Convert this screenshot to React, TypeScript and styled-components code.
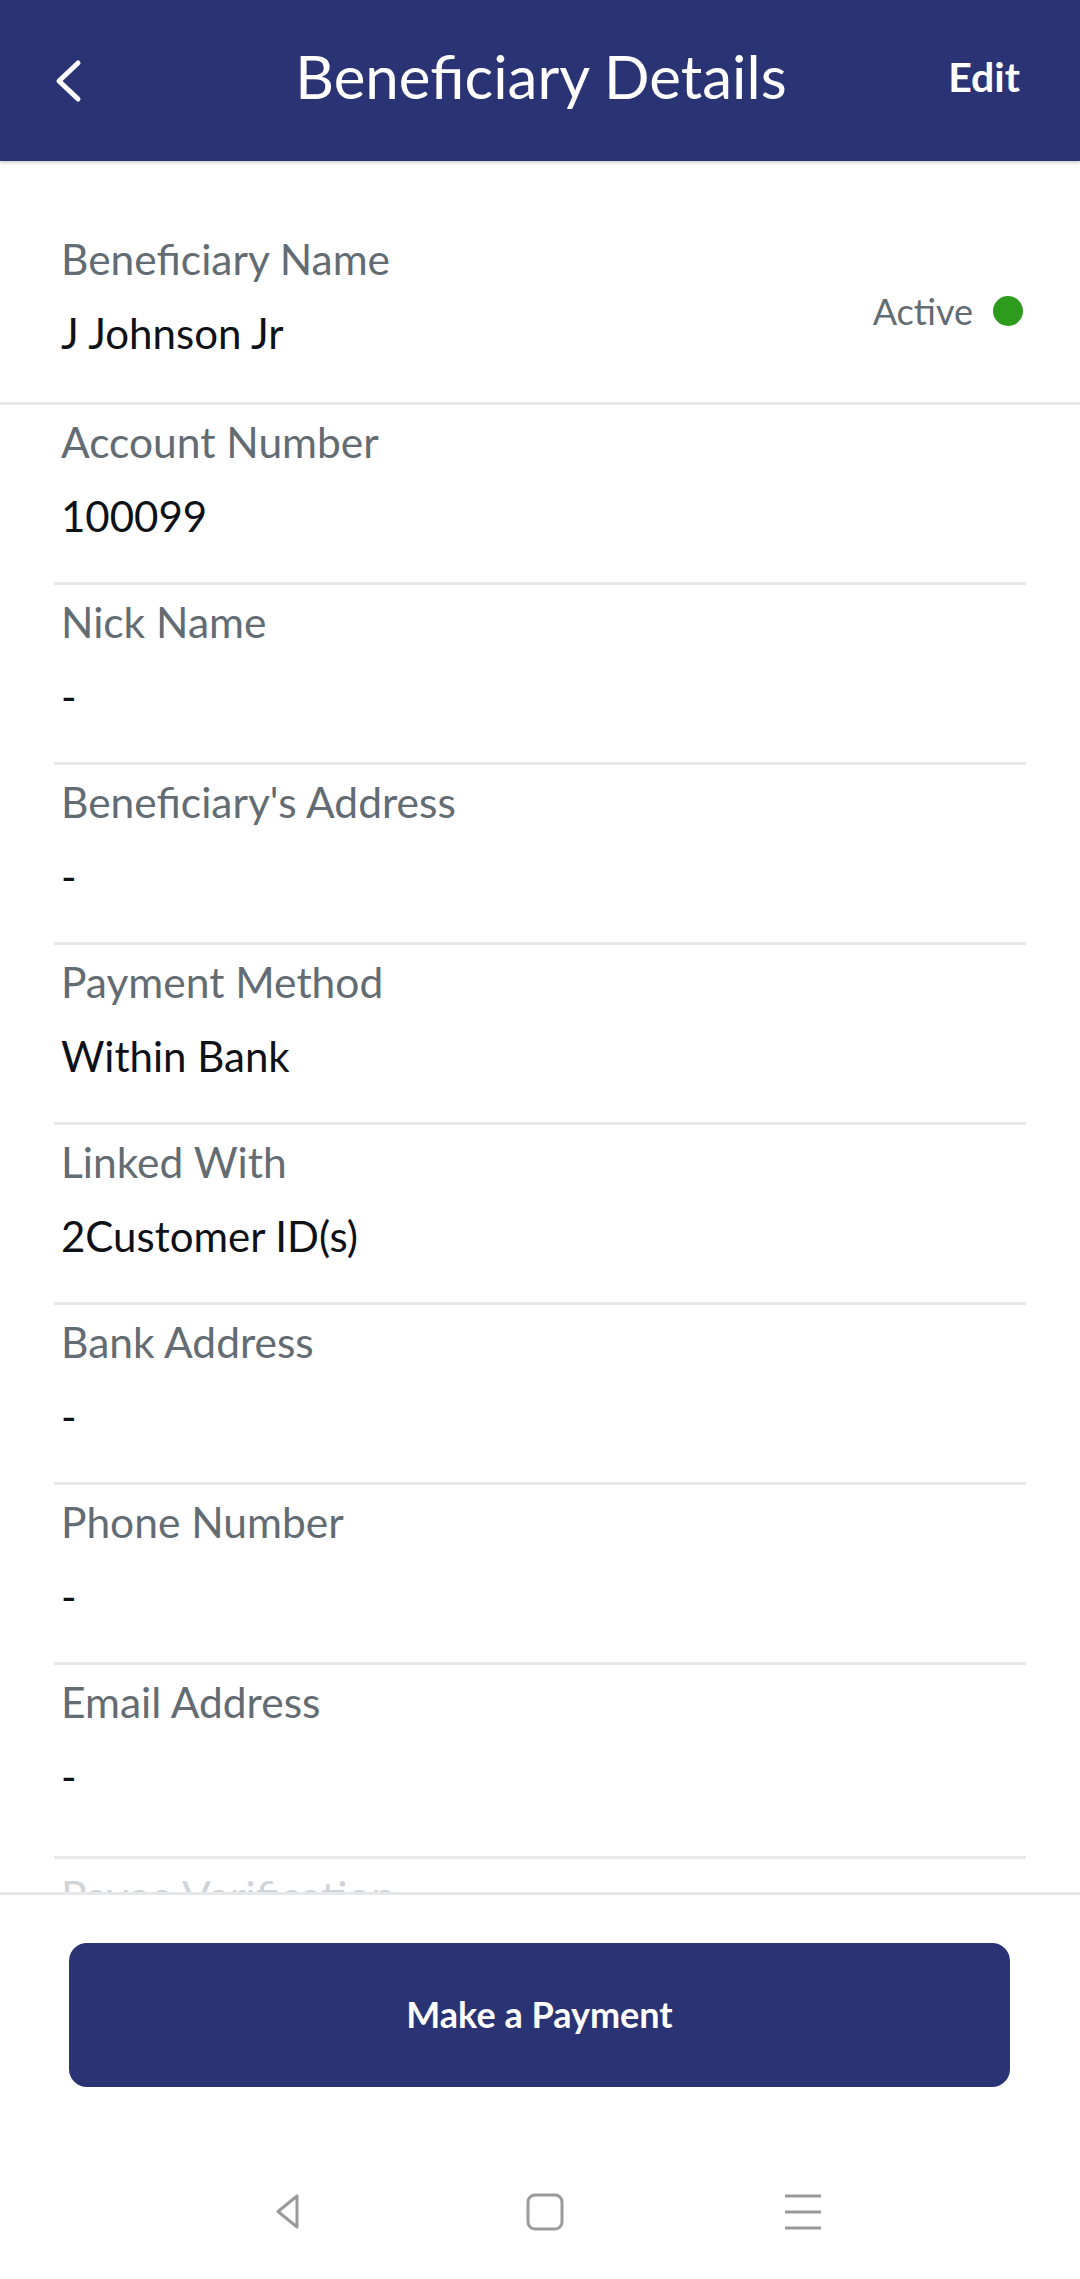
import React from "react";
import styled, { createGlobalStyle } from "styled-components";

const GlobalStyle = createGlobalStyle`
  html, body {
    margin: 0;
    padding: 0;
    background: #ffffff;
  }
  body {
    font-family: Lato, "Noto Sans", "Liberation Sans", sans-serif;
    -webkit-font-smoothing: antialiased;
  }
`;

const NAVY = "#2a3374";
const RULE = "#e4e8eb";

const Screen = styled.div`
  width: 1080px;
  height: 2279px;
  display: flex;
  flex-direction: column;
  background: #fff;
  overflow: hidden;
`;

const Header = styled.header`
  flex: 0 0 161px;
  display: grid;
  grid-template-columns: 1fr auto 1fr;
  align-items: center;
  padding: 0 60px 0 62px;
  background: ${NAVY};
  box-shadow: 0 2px 3px rgba(0, 0, 0, 0.18);
  position: relative;
  z-index: 1;
`;

const BackButton = styled.button`
  justify-self: start;
  margin-left: -10px;
  padding: 0;
  border: 0;
  background: none;
  display: flex;
`;

const Title = styled.h1`
  margin: 0 0 10px;
  color: #fff;
  font-size: 60px;
  font-weight: 400;
  line-height: 70px;
  white-space: nowrap;
`;

const EditLink = styled.span`
  justify-self: end;
  margin-bottom: 8px;
  color: #fff;
  font-size: 41px;
  font-weight: 700;
  line-height: 50px;
`;

const Content = styled.main`
  flex: 1;
  overflow: hidden;
`;

const Summary = styled.section`
  display: flex;
  justify-content: space-between;
  padding: 72px 57px 43px 61px;
  border-bottom: 3px solid ${RULE};
`;

const Field = styled.div`
  display: flex;
  flex-direction: column;
  gap: 22px;
`;

const Label = styled.div<{ $faded?: boolean }>`
  font-size: 42.5px;
  line-height: 52px;
  color: ${(p) => (p.$faded ? "#cfd4d8" : "#626c72")};
  white-space: nowrap;
`;

const Value = styled.div`
  font-size: 42px;
  line-height: 52px;
  color: #0e1116;
  white-space: nowrap;
`;

const Status = styled.div`
  align-self: center;
  margin-top: 30px;
  display: flex;
  align-items: center;
  gap: 20px;
  font-size: 36px;
  line-height: 44px;
  color: #626c72;
`;

const Dot = styled.span`
  width: 30px;
  height: 30px;
  border-radius: 50%;
  background: #2d9c1d;
`;

const List = styled.div`
  padding: 0 54px;
`;

const Row = styled.div<{ $extra?: number }>`
  padding: 11px 7px ${(p) => 40 + (p.$extra ?? 0)}px;
  border-bottom: 3px solid ${RULE};
`;

const Footer = styled.footer`
  flex: 0 0 auto;
  border-top: 3px solid ${RULE};
  padding-top: 48px;
  display: flex;
  flex-direction: column;
`;

const PayButton = styled.button`
  margin: 0 70px 0 69px;
  height: 144px;
  border: 0;
  border-radius: 18px;
  background: ${NAVY};
  color: #fff;
  font-family: Lato, "Noto Sans", sans-serif;
  font-size: 36px;
  font-weight: 700;
  padding-bottom: 4px;
`;

const NavBar = styled.nav`
  margin-top: 58px;
  height: 134px;
  display: flex;
  justify-content: center;
  align-items: center;
  gap: 218px;
  padding-left: 10px;
`;

const NavIcon = styled.svg`
  width: 40px;
  height: 40px;
  color: #9a9a9a;
`;

const rows: { label: string; value: string }[] = [
  { label: "Account Number", value: "100099" },
  { label: "Nick Name", value: "-" },
  { label: "Beneficiary's Address", value: "-" },
  { label: "Payment Method", value: "Within Bank" },
  { label: "Linked With", value: "2Customer ID(s)" },
  { label: "Bank Address", value: "-" },
  { label: "Phone Number", value: "-" },
  { label: "Email Address", value: "-" },
];

export default function App() {
  return (
    <>
      <GlobalStyle />
      <Screen>
        <Header>
          <BackButton aria-label="Back">
            <svg width="30" height="46" viewBox="0 0 30 46">
              <path
                d="M26 5 L7 23 L26 41"
                fill="none"
                stroke="#fff"
                strokeWidth="5"
                strokeLinecap="round"
                strokeLinejoin="round"
              />
            </svg>
          </BackButton>
          <Title>Beneficiary Details</Title>
          <EditLink>Edit</EditLink>
        </Header>

        <Content>
          <Summary>
            <Field>
              <Label>Beneficiary Name</Label>
              <Value>J Johnson Jr</Value>
            </Field>
            <Status>
              Active
              <Dot />
            </Status>
          </Summary>

          <List>
            {rows.map((r, i) => (
              <Row key={r.label} $extra={i === rows.length - 1 ? 14 : 0}>
                <Field>
                  <Label>{r.label}</Label>
                  <Value>{r.value}</Value>
                </Field>
              </Row>
            ))}
            <Row>
              <Field>
                <Label $faded>Payee Verification</Label>
                <Value>-</Value>
              </Field>
            </Row>
          </List>
        </Content>

        <Footer>
          <PayButton>Make a Payment</PayButton>
          <NavBar>
            <NavIcon viewBox="0 0 40 40" fill="none" stroke="currentColor" strokeWidth="3" strokeLinejoin="round">
              <path d="M30 4 L11 19.5 L30 35 Z" />
            </NavIcon>
            <NavIcon viewBox="0 0 40 40" fill="none" stroke="currentColor" strokeWidth="3">
              <rect x="3" y="3" width="34" height="34" rx="7" />
            </NavIcon>
            <NavIcon viewBox="0 0 40 40" fill="none" stroke="currentColor" strokeWidth="3">
              <path d="M2 4 H38 M2 20 H38 M2 36 H38" />
            </NavIcon>
          </NavBar>
        </Footer>
      </Screen>
    </>
  );
}
